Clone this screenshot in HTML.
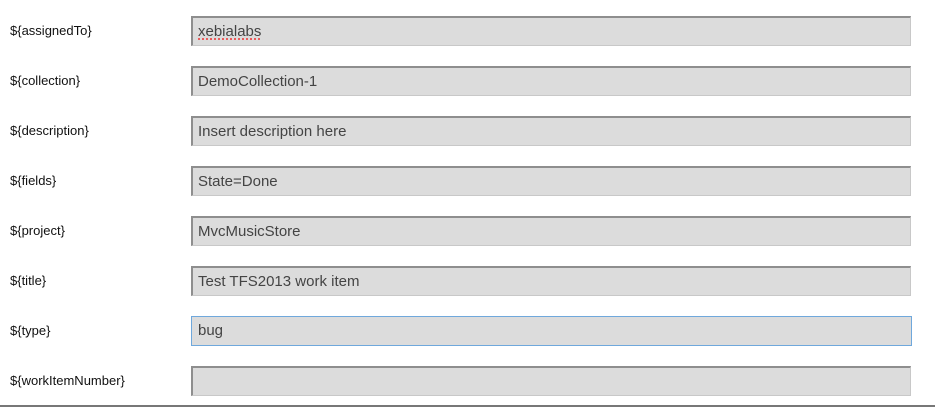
<!DOCTYPE html>
<html><head><style>
body{margin:0;width:935px;height:407px;background:#fff;position:relative;overflow:hidden;font-family:"Liberation Sans",sans-serif}
.l{position:absolute;left:10px;font-size:13px;color:#111;line-height:15px}
.b{position:absolute;left:191px;width:712px;height:27px;background:#dcdcdc;border-top:2px solid #8e8e8e;border-left:2px solid #8e8e8e;border-right:1px solid #c8c8c8;border-bottom:1px solid #c8c8c8;font-size:15px;color:#444;line-height:27px;padding-left:5px;box-sizing:content-box}
.f{border:1px solid #6fa8dc !important;height:28px;width:713px;padding-left:6px}
.sp{text-decoration:underline dotted #e33;text-underline-offset:3px}
.bot{position:absolute;left:0;top:405px;width:935px;height:2px;background:#777}
</style></head><body>
<div class="l" style="top:23px">${assignedTo}</div><div class="b" style="top:16px"><span class="sp">xebialabs</span></div>
<div class="l" style="top:73px">${collection}</div><div class="b" style="top:66px">DemoCollection-1</div>
<div class="l" style="top:123px">${description}</div><div class="b" style="top:116px">Insert description here</div>
<div class="l" style="top:173px">${fields}</div><div class="b" style="top:166px">State=Done</div>
<div class="l" style="top:223px">${project}</div><div class="b" style="top:216px">MvcMusicStore</div>
<div class="l" style="top:273px">${title}</div><div class="b" style="top:266px">Test TFS2013 work item</div>
<div class="l" style="top:323px">${type}</div><div class="b f" style="top:316px">bug</div>
<div class="l" style="top:373px">${workItemNumber}</div><div class="b" style="top:366px"></div>
<div class="bot"></div>
</body></html>
